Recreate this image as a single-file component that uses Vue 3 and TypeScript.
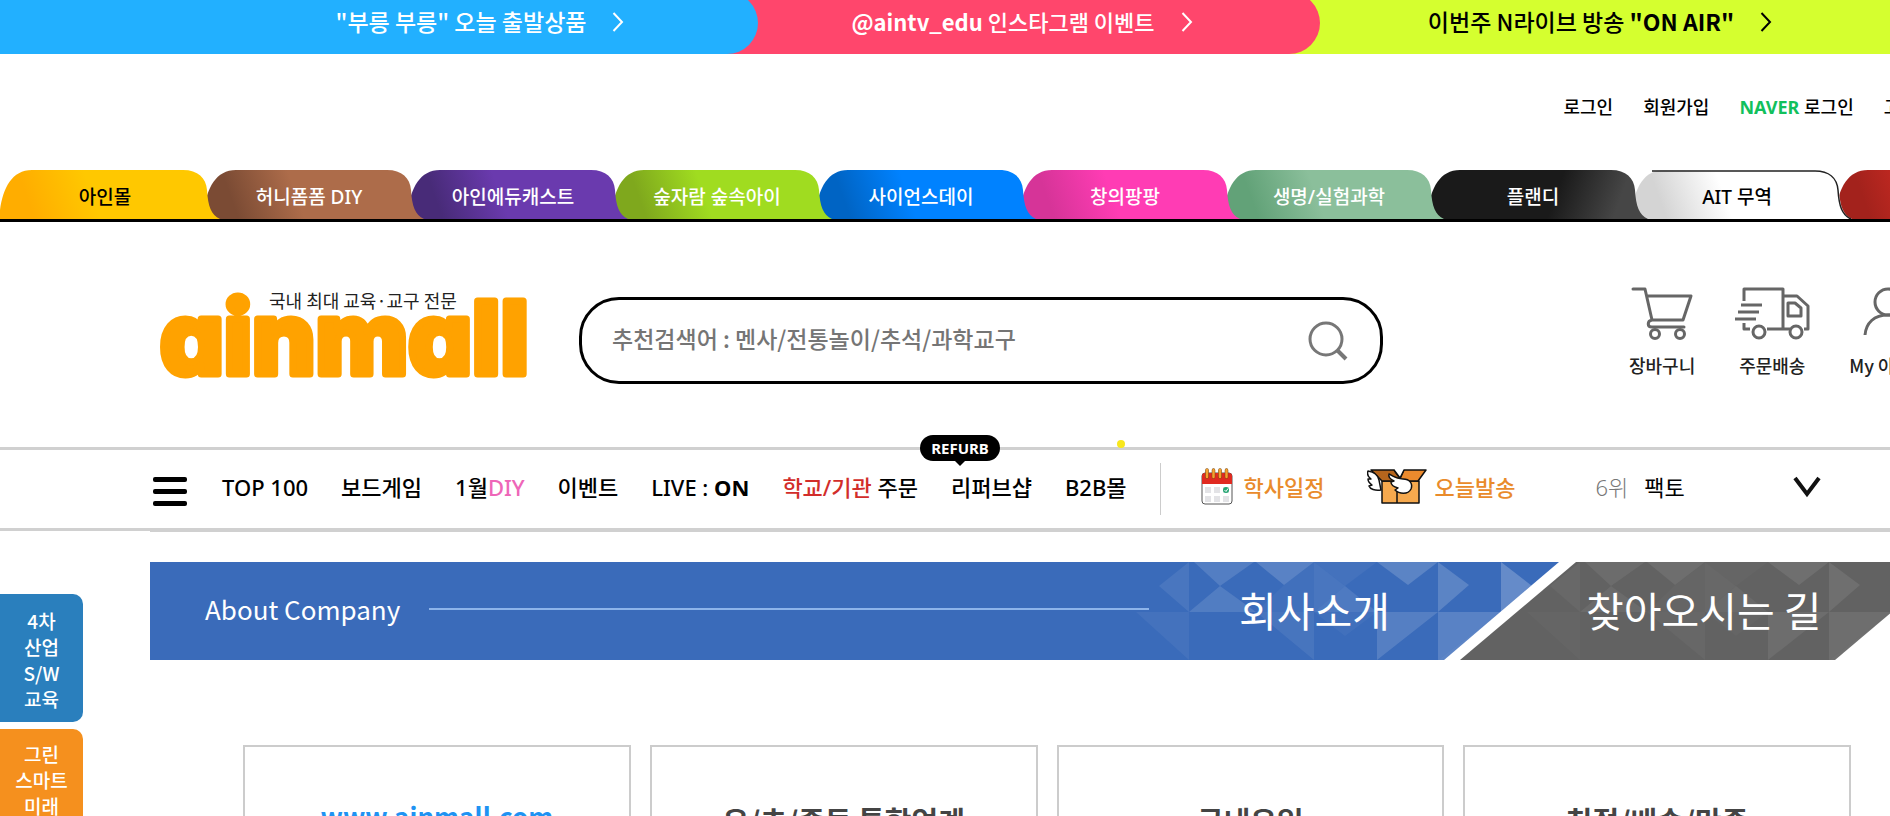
<script setup lang="ts">
import { ref } from 'vue'

interface Promo { kind: string; strongStart?: string; text: string; strongEnd?: string }
interface Shop { name: string; from: string; to: string; ink: string; reverse?: boolean; outline?: boolean }

const promos: Promo[] = [
  { kind: 'blue', text: '"부릉 부릉" 오늘 출발상품' },
  { kind: 'pink', strongStart: '@aintv_edu', text: ' 인스타그램 이벤트' },
  { kind: 'lime', text: '이번주 N라이브 방송 ', strongEnd: '"ON AIR"' },
]

const shops: Shop[] = [
  { name: '아인몰', from: '#ffad00', to: '#ffc800', ink: '#000' },
  { name: '허니폼폼 DIY', from: '#7b4b34', to: '#ad6c4a', ink: '#fff' },
  { name: '아인에듀캐스트', from: '#482b78', to: '#6a3aae', ink: '#fff' },
  { name: '숲자람 숲속아이', from: '#7fa81d', to: '#a0dc20', ink: '#fff' },
  { name: '사이언스데이', from: '#0064c4', to: '#0082ff', ink: '#fff' },
  { name: '창의팡팡', from: '#d63498', to: '#ff3cb4', ink: '#fff' },
  { name: '생명/실험과학', from: '#62a278', to: '#8bbf9b', ink: '#fff' },
  { name: '플랜디', from: '#464646', to: '#1a1a1a', ink: '#fff', reverse: true },
  { name: 'AIT 무역', from: '#d4d4d4', to: '#ffffff', ink: '#000', outline: true },
  { name: '아인스쿨', from: '#a3221c', to: '#d02c24', ink: '#fff' },
]

const facets: { points: string; alpha: number }[] = [
  { points: '109,24 139,0 139,50', alpha: 0.08 },
  { points: '144,0 204,0 170,24', alpha: 0.13 },
  { points: '139,50 170,24 206,50', alpha: 0.12 },
  { points: '206,0 264,0 234,23', alpha: 0.16 },
  { points: '234,23 264,0 264,50 206,50', alpha: 0.04 },
  { points: '264,0 295,24 264,50', alpha: 0.08 },
  { points: '264,50 295,24 327,50', alpha: 0.1 },
  { points: '264,0 327,0 295,24', alpha: 0.05 },
  { points: '327,0 388,0 358,23', alpha: 0.17 },
  { points: '388,0 419,23 388,50', alpha: 0.17 },
  { points: '451,0 482,24 451,50', alpha: 0.22 },
  { points: '327,98 327,50 388,50', alpha: 0.14 },
  { points: '388,50 451,50 388,98', alpha: 0.16 },
  { points: '451,50 388,98 451,98', alpha: 0.18 },
  { points: '86,50 139,50 139,98', alpha: 0.05 },
  { points: '206,50 264,50 264,98', alpha: 0.07 },
  { points: '264,50 327,50 295,74', alpha: 0.04 },
]

const cards = [
  { title: 'www.ainmall.com', web: true },
  { title: '유/초/중등 통합업계', web: false },
  { title: '국내유일', web: false },
  { title: '친절/배송/만족', web: false },
]

const query = ref('')
</script>

<template>
  <div class="page">
    <div class="promos">
      <a v-for="p in promos" :key="p.kind" href="#" class="promo" :class="p.kind">
        <span><b v-if="p.strongStart">{{ p.strongStart }}</b>{{ p.text }}<b v-if="p.strongEnd">{{ p.strongEnd }}</b></span>
        <svg width="12" height="20" viewBox="0 0 12 20"><path d="M1.500 1L10 10L1.500 19" fill="none" stroke="currentColor" stroke-width="2" /></svg>
      </a>
    </div>

    <nav class="utility" aria-label="회원">
      <a href="#">로그인</a>
      <a href="#">회원가입</a>
      <a href="#"><b class="naver">NAVER</b> 로그인</a>
      <a href="#">고객센터</a>
    </nav>

    <nav class="shops" aria-label="쇼핑몰">
      <a v-for="(s, i) in shops" :key="s.name" href="#" class="shop" :style="{ color: s.ink, zIndex: shops.length - i }">
        <svg class="shop-shape" width="222" height="49" viewBox="0 0 222 49">
          <defs>
            <linearGradient :id="'shop' + i" :x1="s.reverse ? 1 : 0" y1="0.540" :x2="s.reverse ? 0 : 1" y2="0.460">
              <stop offset="0.120" :stop-color="s.from" />
              <stop offset="0.420" :stop-color="s.to" />
            </linearGradient>
          </defs>
          <path d="M0 49V40C3 18 12 0 32 0H183C198 0 206 8 207 20C208 36 211 45 220 49Z" :fill="`url(#shop${i})`" />
          <path v-if="s.outline" d="M20 1H183C197 1 205 8 206 20C207 36 210 45 219 49" fill="none" stroke="#222" stroke-width="1.500" />
        </svg>
        <span class="shop-name">{{ s.name }}</span>
      </a>
    </nav>

    <header class="header">
      <a href="#" class="logo" aria-label="ainmall">
        <svg width="380" height="100" viewBox="0 0 380 100">
          <text class="wordmark" x="5" y="86">ainmall</text>
        </svg>
        <span class="slogan">국내 최대 교육·교구 전문</span>
      </a>
      <form class="search" @submit.prevent>
        <input v-model="query" type="text" aria-label="검색어" placeholder="추천검색어 : 멘사/전통놀이/추석/과학교구" />
        <button type="submit" aria-label="검색">
          <svg width="40" height="40" viewBox="0 0 40 40" fill="none" stroke="#777" stroke-width="3">
            <circle cx="18" cy="18" r="16" /><path d="M29 29L38 38" stroke-width="4" />
          </svg>
        </button>
      </form>
      <nav class="quick" aria-label="바로가기">
        <a href="#">
          <svg width="62" height="54" viewBox="0 0 62 54" fill="none" stroke="#666" stroke-width="3" stroke-linecap="round" stroke-linejoin="round">
            <path d="M2 3H14L21 34H52L60 10H16M21 34C16 35 16 41 21 41H53" />
            <circle cx="24" cy="48" r="4.500" /><circle cx="49" cy="48" r="4.500" />
          </svg>
          <span>장바구니</span>
        </a>
        <a href="#">
          <svg width="76" height="54" viewBox="0 0 76 54" fill="none" stroke="#666" stroke-width="3" stroke-linejoin="round">
            <path d="M10 15V3H49V43M10 37V43H16M33 43H56M49 10H63L74 20V43H70M7 19H28M4 26H25M1 33H22" />
            <path d="M54 17H61L67 22V30H54Z" />
            <circle cx="25" cy="46" r="6" /><circle cx="62" cy="46" r="6" />
          </svg>
          <span>주문배송</span>
        </a>
        <a href="#">
          <svg width="50" height="54" viewBox="0 0 50 54" fill="none" stroke="#666" stroke-width="3">
            <circle cx="25" cy="16" r="13" /><path d="M2 49C3 37 11 29 25 29S47 37 48 49" />
          </svg>
          <span>My 아인몰</span>
        </a>
      </nav>
    </header>

    <nav class="menu" aria-label="주메뉴">
      <button type="button" class="burger" aria-label="전체 카테고리"><i /><i /><i /></button>
      <a href="#">TOP 100</a>
      <a href="#">보드게임</a>
      <a href="#">1월<span class="rose">DIY</span></a>
      <a href="#">이벤트</a>
      <a href="#">LIVE : <b>ON</b></a>
      <a href="#"><span class="red">학교/기관</span> 주문</a>
      <a href="#" class="refurb">리퍼브샵<em>REFURB</em></a>
      <a href="#">B2B몰</a>
      <span class="divider" />
      <a href="#" class="feature">
        <svg width="32" height="38" viewBox="0 0 32 38">
          <rect x="1" y="5" width="30" height="31" rx="3" fill="#fff" stroke="#555" />
          <path d="M1 16V8Q1 5 4 5H28Q31 5 31 8V16Z" fill="#e02a20" />
          <g fill="#e3e3e6"><rect x="4" y="19" width="6" height="6" /><rect x="13" y="19" width="6" height="6" /><rect x="22" y="19" width="6" height="6" /><rect x="4" y="28" width="6" height="6" /><rect x="13" y="28" width="6" height="6" /><rect x="22" y="28" width="6" height="6" /></g>
          <circle cx="25" cy="22" r="3" fill="#23a672" /><path d="M23.500 22L25 23.500L27 20.500" fill="none" stroke="#fff" />
          <path d="M6 2V9M12.500 2V9M19 2V9M25.500 2V9" stroke="#7a4a10" stroke-width="3.500" stroke-linecap="round" />
          <path d="M6 2V9M12.500 2V9M19 2V9M25.500 2V9" stroke="#f5a030" stroke-width="2.500" stroke-linecap="round" />
        </svg>
        학사일정
      </a>
      <a href="#" class="feature ship">
        <svg width="60" height="36" viewBox="0 0 60 36" stroke="#111" stroke-width="1.500" stroke-linejoin="round">
          <path d="M15 12H52V34H15Z" fill="#f6a94e" /><path d="M30 12V34" />
          <path d="M15 12L4 1H27L35 12Z" fill="#b5651d" />
          <path d="M32 12L37 1H59L51 12Z" fill="#ec8a2d" /><path d="M27 1L33 9L37 1" fill="#fff" />
          <path d="M1 2C7 3 11 6 12 11L14 21C8 22 3 20 2 17L5 16C2 14 1 12 1 10L4 10C1 8 0 5 1 2Z" fill="#fff" />
          <path d="M22 5C27 8 30 10 36 10C43 10 46 15 44 20C41 26 32 25 28 21L31 19C27 18 24 16 24 13L27 12C23 10 21 8 22 5Z" fill="#fff" />
        </svg>
        오늘발송
      </a>
      <div class="rank"><span>6위</span><a href="#">팩토</a></div>
      <button type="button" class="expand" aria-label="순위 펼치기">
        <svg width="28" height="22" viewBox="0 0 28 22"><path d="M2 2L14 18L26 2" fill="none" stroke="#111" stroke-width="4" /></svg>
      </button>
      <span class="spark" />
    </nav>

    <aside class="side">
      <a href="#" class="side-blue">4차<br />산업<br />S/W<br />교육</a>
      <a href="#" class="side-orange">그린<br />스마트<br />미래<br />학교</a>
    </aside>

    <main class="content">
      <div class="banner">
        <section class="about">
          <svg class="facets" width="509" height="98" viewBox="0 0 509 98">
            <polygon v-for="f in facets" :key="f.points" :points="f.points" fill="#fff" :fill-opacity="f.alpha" />
          </svg>
          <span class="about-en">About Company</span>
          <span class="rule" />
          <h1>회사소개</h1>
        </section>
        <a href="#" class="way">
          <svg class="facets" width="509" height="98" viewBox="0 0 509 98">
            <polygon v-for="f in facets" :key="f.points" :points="f.points" fill="#fff" :fill-opacity="f.alpha / 2" />
          </svg>
          <span>찾아오시는 길</span>
        </a>
      </div>
      <div class="cards">
        <article v-for="c in cards" :key="c.title" class="card"><h2 :class="{ web: c.web }">{{ c.title }}</h2></article>
      </div>
    </main>
  </div>
</template>

<style>
body {
  margin: 0;
  background: #fff;
}
</style>

<style scoped>
.page {
  position: relative;
  height: 100vh;
  overflow: hidden;
  color: #000;
  font-family: "Noto Sans CJK KR", "Noto Sans", sans-serif;
  font-size: 18px;
  font-weight: 500;
}
a {
  color: inherit;
  text-decoration: none;
  white-space: nowrap;
}
button {
  border: 0;
  padding: 0;
  background: none;
}
svg {
  display: block;
  flex: none;
}
.promos {
  display: grid;
  grid-template-columns: 758fr 562fr 570fr;
  height: 54px;
  background: #d5ff2f;
  overflow: hidden;
}
.promo {
  display: flex;
  justify-content: center;
  gap: 26px;
  box-sizing: border-box;
  height: 62px;
  margin-top: -8px;
  padding-top: 14px;
  font-size: 23px;
  line-height: 30px;
  color: #fff;
}
.promo svg {
  margin-top: 6px;
}
.promo.blue {
  position: relative;
  z-index: 2;
  padding-left: 202px;
  border-radius: 0 31px 31px 0;
  background: #22b0ff;
}
.promo.pink {
  position: relative;
  z-index: 1;
  margin-left: -40px;
  padding-left: 6px;
  border-radius: 0 31px 31px 0;
  background: #ff466c;
  font-size: 22px;
}
.promo.lime {
  color: #000;
  padding-right: 10px;
}
.utility,
.shops,
.menu {
  font-family: "Noto Sans", "Noto Sans CJK KR", sans-serif;
}
.utility {
  display: flex;
  justify-content: flex-end;
  gap: 30px;
  height: 116px;
  margin-right: -60px;
  line-height: 106px;
}
.naver {
  color: #12c05c;
}
.shops {
  display: flex;
  height: 49px;
  border-bottom: 3px solid #000;
  overflow: hidden;
}
.shop {
  position: relative;
  flex: none;
  width: 204px;
  height: 49px;
}
.shop-shape {
  position: absolute;
  left: 0;
  top: 0;
}
.shop-name {
  position: relative;
  display: block;
  padding-left: 6px;
  padding-top: 4px;
  line-height: 46px;
  text-align: center;
  font-size: 19px;
}
.header {
  display: flex;
  height: 225px;
  padding-left: 155px;
}
.logo {
  position: relative;
  flex: none;
  width: 424px;
}
.logo svg {
  margin-top: 66px;
}
.wordmark {
  font: 800 100px Inter, sans-serif;
  font-feature-settings: "cv11";
  fill: #ffa200;
  stroke: #ffa200;
  stroke-width: 7px;
  stroke-linejoin: round;
}
.slogan {
  position: absolute;
  left: 114px;
  top: 64px;
  line-height: 28px;
  color: #222;
  font-weight: 400;
}
.search {
  display: flex;
  flex: none;
  align-items: center;
  box-sizing: border-box;
  width: 804px;
  height: 87px;
  margin-top: 75px;
  padding: 0 32px 0 30px;
  border: 3px solid #000;
  border-radius: 40px;
}
.search input {
  flex: 1;
  border: 0;
  outline: 0;
  padding: 0 0 6px;
  background: none;
  font: 500 23px "Noto Sans CJK KR", "Noto Sans", sans-serif;
}
.search input::placeholder {
  color: #757575;
}
.quick {
  display: flex;
  flex: none;
  gap: 39px;
  margin-top: 64px;
  margin-left: 246px;
}
.quick a {
  display: flex;
  flex-direction: column;
  align-items: center;
  gap: 12px;
  line-height: 26px;
  color: #222;
}
.menu {
  position: relative;
  display: flex;
  align-items: center;
  height: 78px;
  padding-left: 153px;
  border-top: 3px solid #d0d0d0;
  border-bottom: 3px solid #d0d0d0;
  font-size: 22px;
}
.menu > a,
.rank {
  margin-right: 33px;
  padding-bottom: 4px;
  line-height: 30px;
}
.burger {
  display: grid;
  gap: 7px;
  width: 34px;
  margin-right: 35px;
  padding-top: 4px;
}
.burger i {
  height: 5px;
  border-radius: 2px;
  background: #000;
}
.rose {
  color: #ee66b8;
}
.red {
  color: #d22d2a;
}
.refurb {
  position: relative;
}
.refurb em {
  position: absolute;
  left: -31px;
  top: -37px;
  width: 80px;
  border-radius: 13px;
  background: #000;
  color: #fff;
  font-size: 15px;
  font-weight: 700;
  font-style: normal;
  line-height: 26px;
  text-align: center;
}
.refurb em::after {
  content: "";
  position: absolute;
  left: 34px;
  top: 25px;
  border: 6px solid transparent;
  border-top-color: #000;
  border-bottom: 0;
}
.divider {
  width: 1px;
  height: 52px;
  margin-right: 40px;
  background: #ccc;
}
.feature {
  display: flex;
  align-items: center;
  gap: 11px;
  color: #e98b2b;
}
.menu > .feature {
  margin-right: 42px;
}
.menu > .ship {
  gap: 8px;
  margin-right: 80px;
}
.menu .rank {
  display: flex;
  gap: 16px;
  width: 197px;
  margin-right: 0;
  font-weight: 400;
}
.rank span {
  color: #777;
  font-weight: 300;
}
.expand {
  padding-bottom: 4px;
}
.spark {
  position: absolute;
  left: 1117px;
  top: -10px;
  width: 8px;
  height: 8px;
  border-radius: 50%;
  background: #f8e71c;
}
.side {
  position: absolute;
  left: 0;
  top: 594px;
  display: grid;
  gap: 7px;
  width: 83px;
  line-height: 26px;
  text-align: center;
  color: #fff;
  font-size: 19px;
}
.side a {
  padding: 12px 0;
  border-radius: 0 10px 10px 0;
}
.side .side-blue {
  padding: 14px 0 10px;
  background: #2a7fbd;
}
.side-orange {
  background: #f5901e;
}
.content {
  margin-left: 150px;
  border-top: 1px solid #d0d0d0;
  padding-top: 30px;
}
.banner {
  display: flex;
  height: 98px;
  margin-right: -61px;
}
.about,
.way {
  position: relative;
  display: flex;
  align-items: center;
  color: #fff;
}
.about {
  flex: 1;
  padding-left: 55px;
  padding-right: 169px;
  background: #3a6bba;
  clip-path: polygon(0 0, 100% 0, calc(100% - 115px) 100%, 0 100%);
}
.about .facets {
  position: absolute;
  right: 0;
  top: 0;
}
.about-en {
  position: relative;
  width: 194px;
  padding-bottom: 6px;
  white-space: nowrap;
  font-size: 26px;
  font-weight: 400;
}
.rule {
  flex: 1;
  height: 2px;
  margin: 0 90px 4px 30px;
  background: #8db4ea;
}
.about h1,
.way span {
  position: relative;
  margin: 0;
  font-size: 41px;
  font-weight: 400;
  line-height: 94px;
  padding-bottom: 4px;
  white-space: nowrap;
}
.way {
  width: 491px;
  margin-left: -99px;
  background: #626262;
  clip-path: polygon(116px 0, 100% 0, calc(100% - 116px) 100%, 0 100%);
}
.way .facets {
  position: absolute;
  left: -19px;
  top: 0;
}
.way span {
  padding-left: 126px;
}
.cards {
  display: grid;
  grid-template-columns: repeat(4, 1fr);
  gap: 19px;
  margin: 85px 39px 0 93px;
}
.card {
  height: 260px;
  box-sizing: border-box;
  border: 2px solid #ccc;
  padding-top: 53px;
  text-align: center;
}
.card h2 {
  margin: 0;
  color: #444;
  font-size: 29px;
  font-weight: 700;
  line-height: 40px;
}
.card .web {
  color: #1f93f2;
  font-size: 26px;
  line-height: 32px;
}
</style>
